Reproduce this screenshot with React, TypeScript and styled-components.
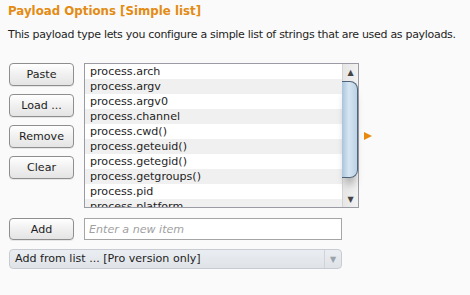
import React from 'react';
import styled, { createGlobalStyle } from 'styled-components';

const GlobalStyle = createGlobalStyle`
  html, body {
    margin: 0;
    padding: 0;
    background: #fafafa;
  }
  body {
    font-family: "DejaVu Sans", Verdana, sans-serif;
    color: #1e1e1e;
  }
`;

const Panel = styled.div`
  width: 470px;
  height: 295px;
  padding: 3px 0 0 9px;
  box-sizing: border-box;
  overflow: hidden;
`;

const Title = styled.h3`
  margin: 0 0 0 -1px;
  font-size: 11.8px;
  font-weight: bold;
  color: #e38b12;
  line-height: 16px;
`;

const Description = styled.p`
  margin: 8px 0 0 -1px;
  font-size: 11px;
  letter-spacing: -0.3px;
  line-height: 15px;
  white-space: nowrap;
`;

const MainRow = styled.div`
  display: flex;
  align-items: flex-start;
  margin-top: 21px;
`;

const ButtonColumn = styled.div`
  display: flex;
  flex-direction: column;
  gap: 8px;
  width: 65px;
  margin-right: 10px;
`;

const PushButton = styled.button`
  width: 65px;
  height: 23px;
  padding: 0;
  border: 1px solid #8e8e8e;
  border-radius: 4px;
  background: linear-gradient(#ffffff, #f0f0f0 50%, #e4e4e4);
  box-shadow: 0 1px 0 rgba(0, 0, 0, 0.08);
  font-family: "DejaVu Sans", Verdana, sans-serif;
  font-size: 11.1px;
  color: #1e1e1e;
`;

const ListBox = styled.div`
  display: flex;
  width: 275px;
  height: 145px;
  border: 1px solid #9b9ba3;
  box-sizing: border-box;
  background: #fff;
`;

const Rows = styled.div`
  flex: 1;
  overflow: hidden;
`;

const Row = styled.div<{ $odd: boolean }>`
  height: 15px;
  line-height: 15px;
  padding-left: 5px;
  font-size: 11.1px;
  background: ${p => (p.$odd ? '#f0f0f0' : '#ffffff')};
  white-space: nowrap;
`;

const ScrollBar = styled.div`
  width: 15px;
  display: flex;
  flex-direction: column;
  background: linear-gradient(90deg, #e6e6e6, #f2f2f2);
  border-left: 1px solid #d4d4d4;
`;

const ArrowCell = styled.div`
  height: 16px;
  display: flex;
  align-items: center;
  justify-content: center;
  font-size: 8px;
  color: #444;
`;

const Track = styled.div`
  flex: 1;
  padding-top: 1px;
`;

const Thumb = styled.div`
  height: 95px;
  margin-left: -1px;
  border: 1px solid #4e6378;
  border-left: none;
  border-radius: 0 8px 8px 0;
  background: linear-gradient(90deg, #a9c4dc, #d6e5f2 45%, #bcd2e6);
  box-shadow: 0 10px 8px -4px rgba(0, 0, 0, 0.35);
`;

const Pointer = styled.div`
  margin: 69px 0 0 5px;
  width: 0;
  height: 0;
  border-top: 4.5px solid transparent;
  border-bottom: 4.5px solid transparent;
  border-left: 8px solid #e8890c;
`;

const AddRow = styled.div`
  display: flex;
  align-items: center;
  margin-top: 10px;
  gap: 10px;
`;

const AddButton = styled(PushButton)`
  height: 22px;
`;

const TextField = styled.input`
  width: 258px;
  height: 22px;
  box-sizing: border-box;
  border: 1px solid #a5a5a5;
  background: #fff;
  padding: 0 4px;
  font-family: "DejaVu Sans", Verdana, sans-serif;
  font-size: 11.1px;
  outline: none;
  &::placeholder {
    color: #a0a0a0;
    font-style: italic;
  }
`;

const Dropdown = styled.div`
  display: flex;
  align-items: stretch;
  width: 333px;
  height: 20px;
  margin-top: 9px;
  box-sizing: border-box;
  border: 1px solid #c8ccd2;
  border-radius: 4px;
  background: linear-gradient(#eaedf1, #dfe3e8);
  font-size: 11.1px;
  color: #1e1e1e;
`;

const DropdownLabel = styled.div`
  flex: 1;
  padding-left: 5px;
  line-height: 18px;
`;

const DropdownArrow = styled.div`
  width: 16px;
  border-left: 1px solid #d0d4da;
  display: flex;
  align-items: center;
  justify-content: center;
  font-size: 8px;
  color: #9aa2ab;
`;

const items = [
  'process.arch',
  'process.argv',
  'process.argv0',
  'process.channel',
  'process.cwd()',
  'process.geteuid()',
  'process.getegid()',
  'process.getgroups()',
  'process.pid',
  'process.platform',
];

export default function App() {
  return (
    <Panel>
      <GlobalStyle />
      <Title>Payload Options [Simple list]</Title>
      <Description>
        This payload type lets you configure a simple list of strings that are used as payloads.
      </Description>
      <MainRow>
        <ButtonColumn>
          <PushButton>Paste</PushButton>
          <PushButton>Load ...</PushButton>
          <PushButton>Remove</PushButton>
          <PushButton>Clear</PushButton>
        </ButtonColumn>
        <ListBox>
          <Rows>
            {items.map((item, i) => (
              <Row key={item} $odd={i % 2 === 1}>
                {item}
              </Row>
            ))}
          </Rows>
          <ScrollBar>
            <ArrowCell>▲</ArrowCell>
            <Track>
              <Thumb />
            </Track>
            <ArrowCell>▼</ArrowCell>
          </ScrollBar>
        </ListBox>
        <Pointer />
      </MainRow>
      <AddRow>
        <AddButton>Add</AddButton>
        <TextField placeholder="Enter a new item" />
      </AddRow>
      <Dropdown>
        <DropdownLabel>Add from list ... [Pro version only]</DropdownLabel>
        <DropdownArrow>▼</DropdownArrow>
      </Dropdown>
    </Panel>
  );
}
